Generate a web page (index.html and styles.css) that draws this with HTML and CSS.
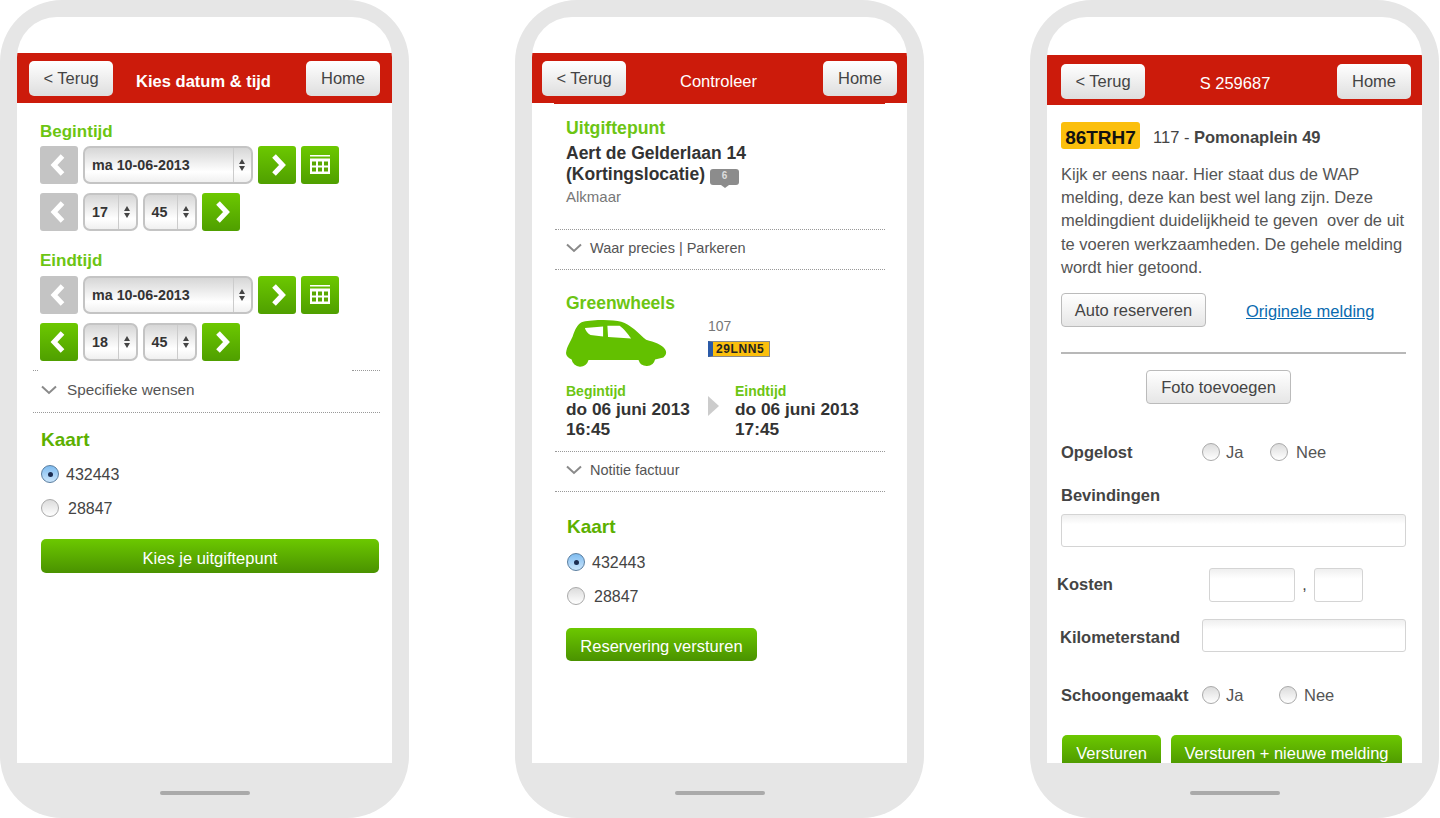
FILE: index.html
```html
<!DOCTYPE html>
<html lang="en">
<head>
    <meta charset="UTF-8">
    <meta name="viewport" content="width=device-width, initial-scale=1.0">
    <title>Greenwheels mobile screens</title>
    <link rel="stylesheet" href="styles.css">
</head>
<body>
    <svg class="sprites" width="0" height="0">
        <symbol id="prev" viewBox="0 0 38 38"><path d="M22.5 10 L14 19 L22.5 28" fill="none" stroke="#fff" stroke-width="5"/></symbol>
        <symbol id="next" viewBox="0 0 38 38"><path d="M16 10 L24.5 19 L16 28" fill="none" stroke="#fff" stroke-width="5"/></symbol>
        <symbol id="cal" viewBox="0 0 38 38"><path d="M9 9 H29 V10.5 H9 Z M9 12.5 H29 V28 H9 Z" fill="#fff"/><path d="M11 15.5 h4 v4 h-4 z M17 15.5 h4 v4 h-4 z M23 15.5 h4 v4 h-4 z M11 21.5 h4 v4 h-4 z M17 21.5 h4 v4 h-4 z M23 21.5 h4 v4 h-4 z" fill="#5aa800"/></symbol>
        <symbol id="chev" viewBox="0 0 16 10"><path d="M1 1.5 L8 8 L15 1.5" fill="none" stroke="#8a8a8a" stroke-width="2"/></symbol>
    </svg>

    <div class="stage">

        <!-- kies datum en tijd -->
        <div class="phone">
            <div class="screen">
                <div class="bar bar-one">
                    <div class="btn-top">&lt; Terug</div>
                    <div class="bar-title bold">Kies datum &amp; tijd</div>
                    <div class="btn-top home">Home</div>
                </div>
                <div class="content content-one">
                    <div class="label first">Begintijd</div>
                    <div class="row">
                        <div class="sq off"><svg><use href="#prev"/></svg></div>
                        <div class="pick date"><span>ma 10-06-2013</span><i class="spin"></i></div>
                        <div class="sq"><svg><use href="#next"/></svg></div>
                        <div class="sq"><svg><use href="#cal"/></svg></div>
                    </div>
                    <div class="row">
                        <div class="sq off"><svg><use href="#prev"/></svg></div>
                        <div class="pick num"><span>17</span><i class="spin"></i></div>
                        <div class="pick num"><span>45</span><i class="spin"></i></div>
                        <div class="sq"><svg><use href="#next"/></svg></div>
                    </div>
                    <div class="label second">Eindtijd</div>
                    <div class="row">
                        <div class="sq off"><svg><use href="#prev"/></svg></div>
                        <div class="pick date"><span>ma 10-06-2013</span><i class="spin"></i></div>
                        <div class="sq"><svg><use href="#next"/></svg></div>
                        <div class="sq"><svg><use href="#cal"/></svg></div>
                    </div>
                    <div class="row">
                        <div class="sq"><svg><use href="#prev"/></svg></div>
                        <div class="pick num"><span>18</span><i class="spin"></i></div>
                        <div class="pick num"><span>45</span><i class="spin"></i></div>
                        <div class="sq"><svg><use href="#next"/></svg></div>
                    </div>
                    <div class="dots-broken"><span></span><span></span></div>
                    <div class="fold fold-one"><svg class="chev"><use href="#chev"/></svg>Specifieke wensen</div>
                    <div class="dots"></div>
                    <div class="kaart">Kaart</div>
                    <div class="radio-row on"><i class="radio"></i>432443</div>
                    <div class="radio-row"><i class="radio"></i>28847</div>
                    <div class="btn-green wide">Kies je uitgiftepunt</div>
                </div>
            </div>
            <div class="home-bar"></div>
        </div>

        <!-- controleer -->
        <div class="phone">
            <div class="screen">
                <div class="bar bar-two">
                    <div class="btn-top">&lt; Terug</div>
                    <div class="bar-title">Controleer</div>
                    <div class="btn-top home">Home</div>
                </div>
                <div class="bar-lip"></div>
                <div class="content content-two">
                    <div class="label uitgifte">Uitgiftepunt</div>
                    <div class="place">Aert de Gelderlaan 14<br>(Kortingslocatie) <span class="bubble">6</span></div>
                    <div class="city">Alkmaar</div>
                    <div class="dots dots-two gap-city"></div>
                    <div class="fold fold-two"><svg class="chev"><use href="#chev"/></svg>Waar precies | Parkeren</div>
                    <div class="dots dots-two"></div>
                    <div class="label green-head">Greenwheels</div>
                    <div class="car-row">
                        <svg class="car" viewBox="78 105 305 145">
                            <path fill-rule="evenodd" fill="#63c000" d="M78 205 C80 185 92 170 98 155 C105 135 112 118 125 112 C150 103 215 103 245 110 C272 118 298 145 320 165 C345 172 368 180 376 192 C384 202 380 212 372 218 L347 224 A26 26 0 0 1 297 226 L146 226 A26 26 0 0 1 95 224 C85 220 78 214 78 205 Z M135 129 L190 125 L190 155 L152 150 C144 146 137 137 135 129 Z M203 122 L240 122 C252 130 265 147 275 161 L205 156 Z"/>
                        </svg>
                        <div class="car-info">
                            <div class="car-num">107</div>
                            <div class="nl-plate"><b>29LNN5</b></div>
                        </div>
                    </div>
                    <div class="times">
                        <div>
                            <div class="time-label">Begintijd</div>
                            <div class="time-val">do 06 juni 2013<br>16:45</div>
                        </div>
                        <i class="arrow"></i>
                        <div>
                            <div class="time-label">Eindtijd</div>
                            <div class="time-val">do 06 juni 2013<br>17:45</div>
                        </div>
                    </div>
                    <div class="dots dots-two gap-times"></div>
                    <div class="fold fold-two"><svg class="chev"><use href="#chev"/></svg>Notitie factuur</div>
                    <div class="dots dots-two"></div>
                    <div class="kaart kaart-two">Kaart</div>
                    <div class="radio-row on"><i class="radio"></i>432443</div>
                    <div class="radio-row"><i class="radio"></i>28847</div>
                    <div class="btn-green send">Reservering versturen</div>
                </div>
            </div>
            <div class="home-bar"></div>
        </div>

        <!-- melding -->
        <div class="phone">
            <div class="screen">
                <div class="bar bar-three">
                    <div class="btn-top">&lt; Terug</div>
                    <div class="bar-title">S 259687</div>
                    <div class="btn-top home">Home</div>
                </div>
                <div class="content content-three">
                    <div class="plate-row">
                        <div class="plate">86TRH7</div>
                        <div class="plate-text">117 - <b>Pomonaplein 49</b></div>
                    </div>
                    <p class="message">Kijk er eens naar. Hier staat dus de WAP<br>melding, deze kan best wel lang zijn. Deze<br>meldingdient duidelijkheid te geven&nbsp; over de uit<br>te voeren werkzaamheden. De gehele melding<br>wordt hier getoond.</p>
                    <div class="auto-row">
                        <div class="btn-grey auto">Auto reserveren</div>
                        <a class="link" href="#">Originele melding</a>
                    </div>
                    <div class="rule"></div>
                    <div class="btn-grey foto">Foto toevoegen</div>
                    <div class="form-row opgelost">
                        <div class="form-label opgelost-label">Opgelost</div>
                        <div class="choice ja"><i class="radio"></i>Ja</div>
                        <div class="choice nee"><i class="radio"></i>Nee</div>
                    </div>
                    <div class="form-label bevind">Bevindingen</div>
                    <input class="field field-full" type="text">
                    <div class="form-row kosten">
                        <div class="form-label kosten-label">Kosten</div>
                        <input class="field field-euro" type="text">
                        <span class="comma">,</span>
                        <input class="field field-cent" type="text">
                    </div>
                    <div class="form-row km">
                        <div class="form-label km-label">Kilometerstand</div>
                        <input class="field field-km" type="text">
                    </div>
                    <div class="form-row schoon">
                        <div class="form-label schoon-label">Schoongemaakt</div>
                        <div class="choice ja-wide"><i class="radio"></i>Ja</div>
                        <div class="choice"><i class="radio"></i>Nee</div>
                    </div>
                    <div class="send-row">
                        <div class="btn-green">Versturen</div>
                        <div class="btn-green grow">Versturen + nieuwe melding</div>
                    </div>
                </div>
            </div>
            <div class="home-bar"></div>
        </div>

    </div>
</body>
</html>
```

FILE: styles.css
```css
* { margin: 0; padding: 0; box-sizing: border-box; }
body {
    background-color: #fff;
    color: #444;
    font-family: 'Liberation Sans', Arial, sans-serif;
    height: 818px;
    overflow: hidden;
}
.sprites { display: block; height: 0; }
.stage { display: flex; gap: 106px; }

/* phone frame */
.phone {
    width: 409px;
    height: 818px;
    padding: 17px 17px 0;
    background-color: #e6e6e6;
    border-radius: 62px;
}
.screen {
    height: 746px;
    background-color: #fff;
    border-radius: 40px 40px 0 0;
    overflow: hidden;
}
.home-bar {
    width: 90px;
    height: 4px;
    margin: 28px auto 0;
    background-color: #aaa;
    border-radius: 2px;
}

/* red bar */
.bar {
    display: flex;
    align-items: flex-start;
    height: 50px;
    margin-top: 36px;
    padding: 8px 12px 0;
    background-color: #cc1b0b;
}
.bar-two { padding: 8px 10px 0; }
.bar-three { margin-top: 38px; padding: 9px 11px 0 14px; }
.bar-three .bar-title { line-height: 39px; }
.bar-lip { height: 1px; margin: 0 22px; background-color: #cc1b0b; }
.btn-top {
    width: 84px;
    height: 35px;
    font-size: 16.5px;
    line-height: 35px;
    text-align: center;
    color: #444;
    background: linear-gradient(#fff, #dedede);
    border-radius: 5px;
}
.btn-top.home { width: 74px; }
.bar-title {
    flex: 1;
    padding-right: 12px;
    font-size: 16.5px;
    line-height: 41px;
    text-align: center;
    color: #fff;
}
.bar-title.bold { font-weight: bold; }

/* shared content */
.content-one { padding: 0 12px 0 23px; }
.content-two { padding: 0 22px 0 34px; }
.content-three { padding: 0 16px 0 14px; }
.label {
    font-size: 17px;
    font-weight: bold;
    line-height: 18px;
    color: #6cc513;
}
.label.first { margin-top: 19px; margin-bottom: 4px; line-height: 20px; }
.label.second { margin-top: 20px; margin-bottom: 5px; line-height: 20px; }
.row { display: flex; gap: 5px; margin-bottom: 9px; }
.sq {
    width: 38px;
    height: 38px;
    background: linear-gradient(#6cc800, #4f9f00);
    border-radius: 3px;
    flex: none;
}
.sq svg { display: block; width: 38px; height: 38px; }
.sq.off { background: #c4c4c4; }
.pick {
    display: flex;
    align-items: center;
    height: 38px;
    padding-left: 7px;
    font-size: 14.3px;
    font-weight: bold;
    color: #333;
    background: linear-gradient(#d6d6d6, #fff 70%, #f0f0f0);
    border: 2px solid #c4c4c4;
    border-radius: 7px;
}
.pick.date { width: 170px; }
.pick.num { width: 54.5px; }
.pick span { flex: 1; }
.spin {
    position: relative;
    flex: none;
    width: 18px;
    height: 100%;
    border-left: 1px solid #ccc;
}
.spin::before, .spin::after {
    content: "";
    position: absolute;
    left: 5px;
    border-left: 3px solid transparent;
    border-right: 3px solid transparent;
}
.spin::before { top: 11px; border-bottom: 5px solid #444; }
.spin::after { top: 18px; border-top: 5px solid #444; }

.dots { height: 1px; border-top: 1px dotted #999; }
.content-one .dots { margin-left: -7px; }
.dots-two { margin-left: -11px; }
.gap-city { margin-top: 23px; }
.gap-times { margin-top: 12px; }
.dots-broken {
    display: flex;
    justify-content: space-between;
    margin-left: -7px;
}
.dots-broken span { height: 1px; border-top: 1px dotted #999; }
.dots-broken span:first-child { width: 5px; }
.dots-broken span:last-child { width: 28px; }
.fold { display: flex; align-items: center; color: #555; }
.fold-one { height: 41px; padding-bottom: 4px; font-size: 15.3px; }
.fold-two { height: 39px; padding-bottom: 3px; font-size: 14.5px; }
.chev { flex: none; width: 16px; height: 10px; margin-right: 8px; }
.content-one .chev { margin-left: 1px; margin-right: 10px; }
.kaart {
    margin-top: 16px;
    margin-bottom: 6px;
    margin-left: 1px;
    font-size: 19px;
    font-weight: bold;
    line-height: 22px;
    color: #5cb000;
}
.kaart-two { margin-top: 24px; margin-bottom: 7px; }
.radio-row {
    display: flex;
    align-items: center;
    gap: 7px;
    height: 34px;
    padding-top: 2px;
    font-size: 16px;
    color: #444;
}
.radio-row .radio { margin-top: -2px; }
.radio-row + .radio-row { gap: 9px; }
.radio {
    flex: none;
    position: relative;
    width: 18px;
    height: 18px;
    background: linear-gradient(#dcdcdc, #fff);
    border: 1px solid #aaa;
    border-radius: 50%;
}
.content-one .radio, .content-two .radio { margin-left: 1px; }
.on .radio { background: linear-gradient(#7fbcf0, #cbe5fb); border-color: #5a7ea0; }
.on .radio::after {
    content: "";
    position: absolute;
    top: 5.5px;
    left: 5.5px;
    width: 5px;
    height: 5px;
    background-color: #1c2c50;
    border-radius: 50%;
}
.btn-green {
    height: 34px;
    padding: 0 14px;
    font-size: 16.5px;
    line-height: 38px;
    text-align: center;
    color: #fff;
    background: linear-gradient(#6cc800, #4a9200);
    border-radius: 5px;
}
.btn-green.wide { width: 338px; margin-top: 14px; margin-left: 1px; }
.btn-green.send { width: 191px; height: 33px; margin-top: 15px; padding: 0; line-height: 36px; }

/* controleer */
.label.uitgifte { margin-top: 15px; font-size: 17.7px; }
.place {
    margin-top: 6px;
    font-size: 17.5px;
    font-weight: bold;
    line-height: 21px;
    color: #333;
}
.bubble {
    position: relative;
    top: 5px;
    display: inline-block;
    width: 29px;
    height: 16px;
    font-size: 10px;
    line-height: 14px;
    text-align: center;
    vertical-align: top;
    color: #ddd;
    background-color: #8c8c8c;
    border-radius: 3px;
}
.bubble::after {
    content: "";
    position: absolute;
    left: 11px;
    bottom: -3px;
    border-left: 4px solid transparent;
    border-right: 4px solid transparent;
    border-top: 3px solid #8c8c8c;
}
.city { margin-top: 3px; font-size: 15px; line-height: 18px; color: #777; }
.label.green-head { margin-top: 24px; font-size: 17.5px; }
.car-row { display: flex; height: 49px; margin-top: 6px; }
.car { flex: none; width: 101px; height: 48px; margin-top: 2px; margin-right: 41px; }
.car-num { font-size: 14px; line-height: 16px; color: #777; }
.nl-plate {
    width: 62px;
    height: 16px;
    margin-top: 7px;
    padding-left: 3px;
    background-color: #fbbf0d;
    border: 1px solid #888;
    border-left: 5px solid #2a5aa8;
    font-size: 12px;
    line-height: 14px;
    color: #222;
    letter-spacing: 0.6px;
}
.times {
    display: grid;
    grid-template-columns: 142px 27px 1fr;
    margin-top: 17px;
}
.time-label { font-size: 14px; font-weight: bold; line-height: 14px; color: #6cc513; }
.time-val { margin-top: 1px; font-size: 17.3px; font-weight: bold; line-height: 20px; color: #333; }
.arrow {
    width: 0;
    height: 0;
    margin-top: 12px;
    border-top: 10px solid transparent;
    border-bottom: 10px solid transparent;
    border-left: 11px solid #ccc;
}

/* melding */
.plate-row { display: flex; align-items: center; margin-top: 17px; }
.plate {
    width: 79px;
    height: 27px;
    font-size: 19px;
    font-weight: bold;
    line-height: 31px;
    text-align: center;
    color: #111;
    background-color: #fbbf0d;
    border-radius: 3px;
}
.plate-text { margin-left: 13px; padding-top: 3px; font-size: 16.5px; color: #444; }
.message { margin-top: 14px; font-size: 16.5px; line-height: 23.2px; color: #555; }
.auto-row { display: flex; align-items: center; margin-top: 14px; }
.btn-grey {
    height: 34px;
    font-size: 16.5px;
    line-height: 33px;
    text-align: center;
    color: #444;
    background: linear-gradient(#fff, #e6e6e6);
    border: 1px solid #bbb;
    border-radius: 4px;
}
.auto { width: 145px; }
.foto { width: 145px; margin-top: 16px; margin-left: 85px; }
.link { margin-left: 40px; padding-top: 3px; font-size: 16.5px; color: #0a6ab0; }
.rule { height: 2px; margin-top: 25px; background-color: #b8b8b8; }
.form-row { display: flex; align-items: center; }
.form-label { font-size: 16.5px; font-weight: bold; line-height: 18px; color: #444; }
.opgelost { height: 24px; margin-top: 36px; }
.opgelost-label { width: 141px; }
.choice { display: flex; align-items: center; gap: 7px; font-size: 16.5px; color: #555; }
.choice.ja { width: 68px; gap: 6px; }
.choice.nee { gap: 8px; }
.choice.ja-wide { width: 77px; gap: 6px; }
.bevind { margin-top: 22px; }
.field {
    display: block;
    height: 33px;
    background: linear-gradient(#efefef, #fff 30%);
    border: 1px solid #d4d4d4;
    border-radius: 3px;
    outline: none;
}
.field-full { width: 345px; margin-top: 10px; }
.kosten { height: 34px; margin-top: 21px; margin-left: -4px; }
.kosten-label { width: 152px; padding-bottom: 2px; }
.field-euro { width: 86px; height: 34px; }
.comma { width: 19px; text-align: center; font-size: 16px; }
.field-cent { width: 49px; height: 34px; }
.km { height: 33px; margin-top: 17px; margin-left: -1px; }
.km-label { width: 142px; padding-top: 3px; }
.field-km { width: 204px; }
.schoon { height: 24px; margin-top: 31px; }
.schoon-label { width: 141px; }
.send-row { display: flex; gap: 10px; margin-top: 28px; margin-left: 1px; }
.send-row .btn-green { width: 99px; padding: 0; line-height: 36px; }
.send-row .grow { width: 231px; }
```
